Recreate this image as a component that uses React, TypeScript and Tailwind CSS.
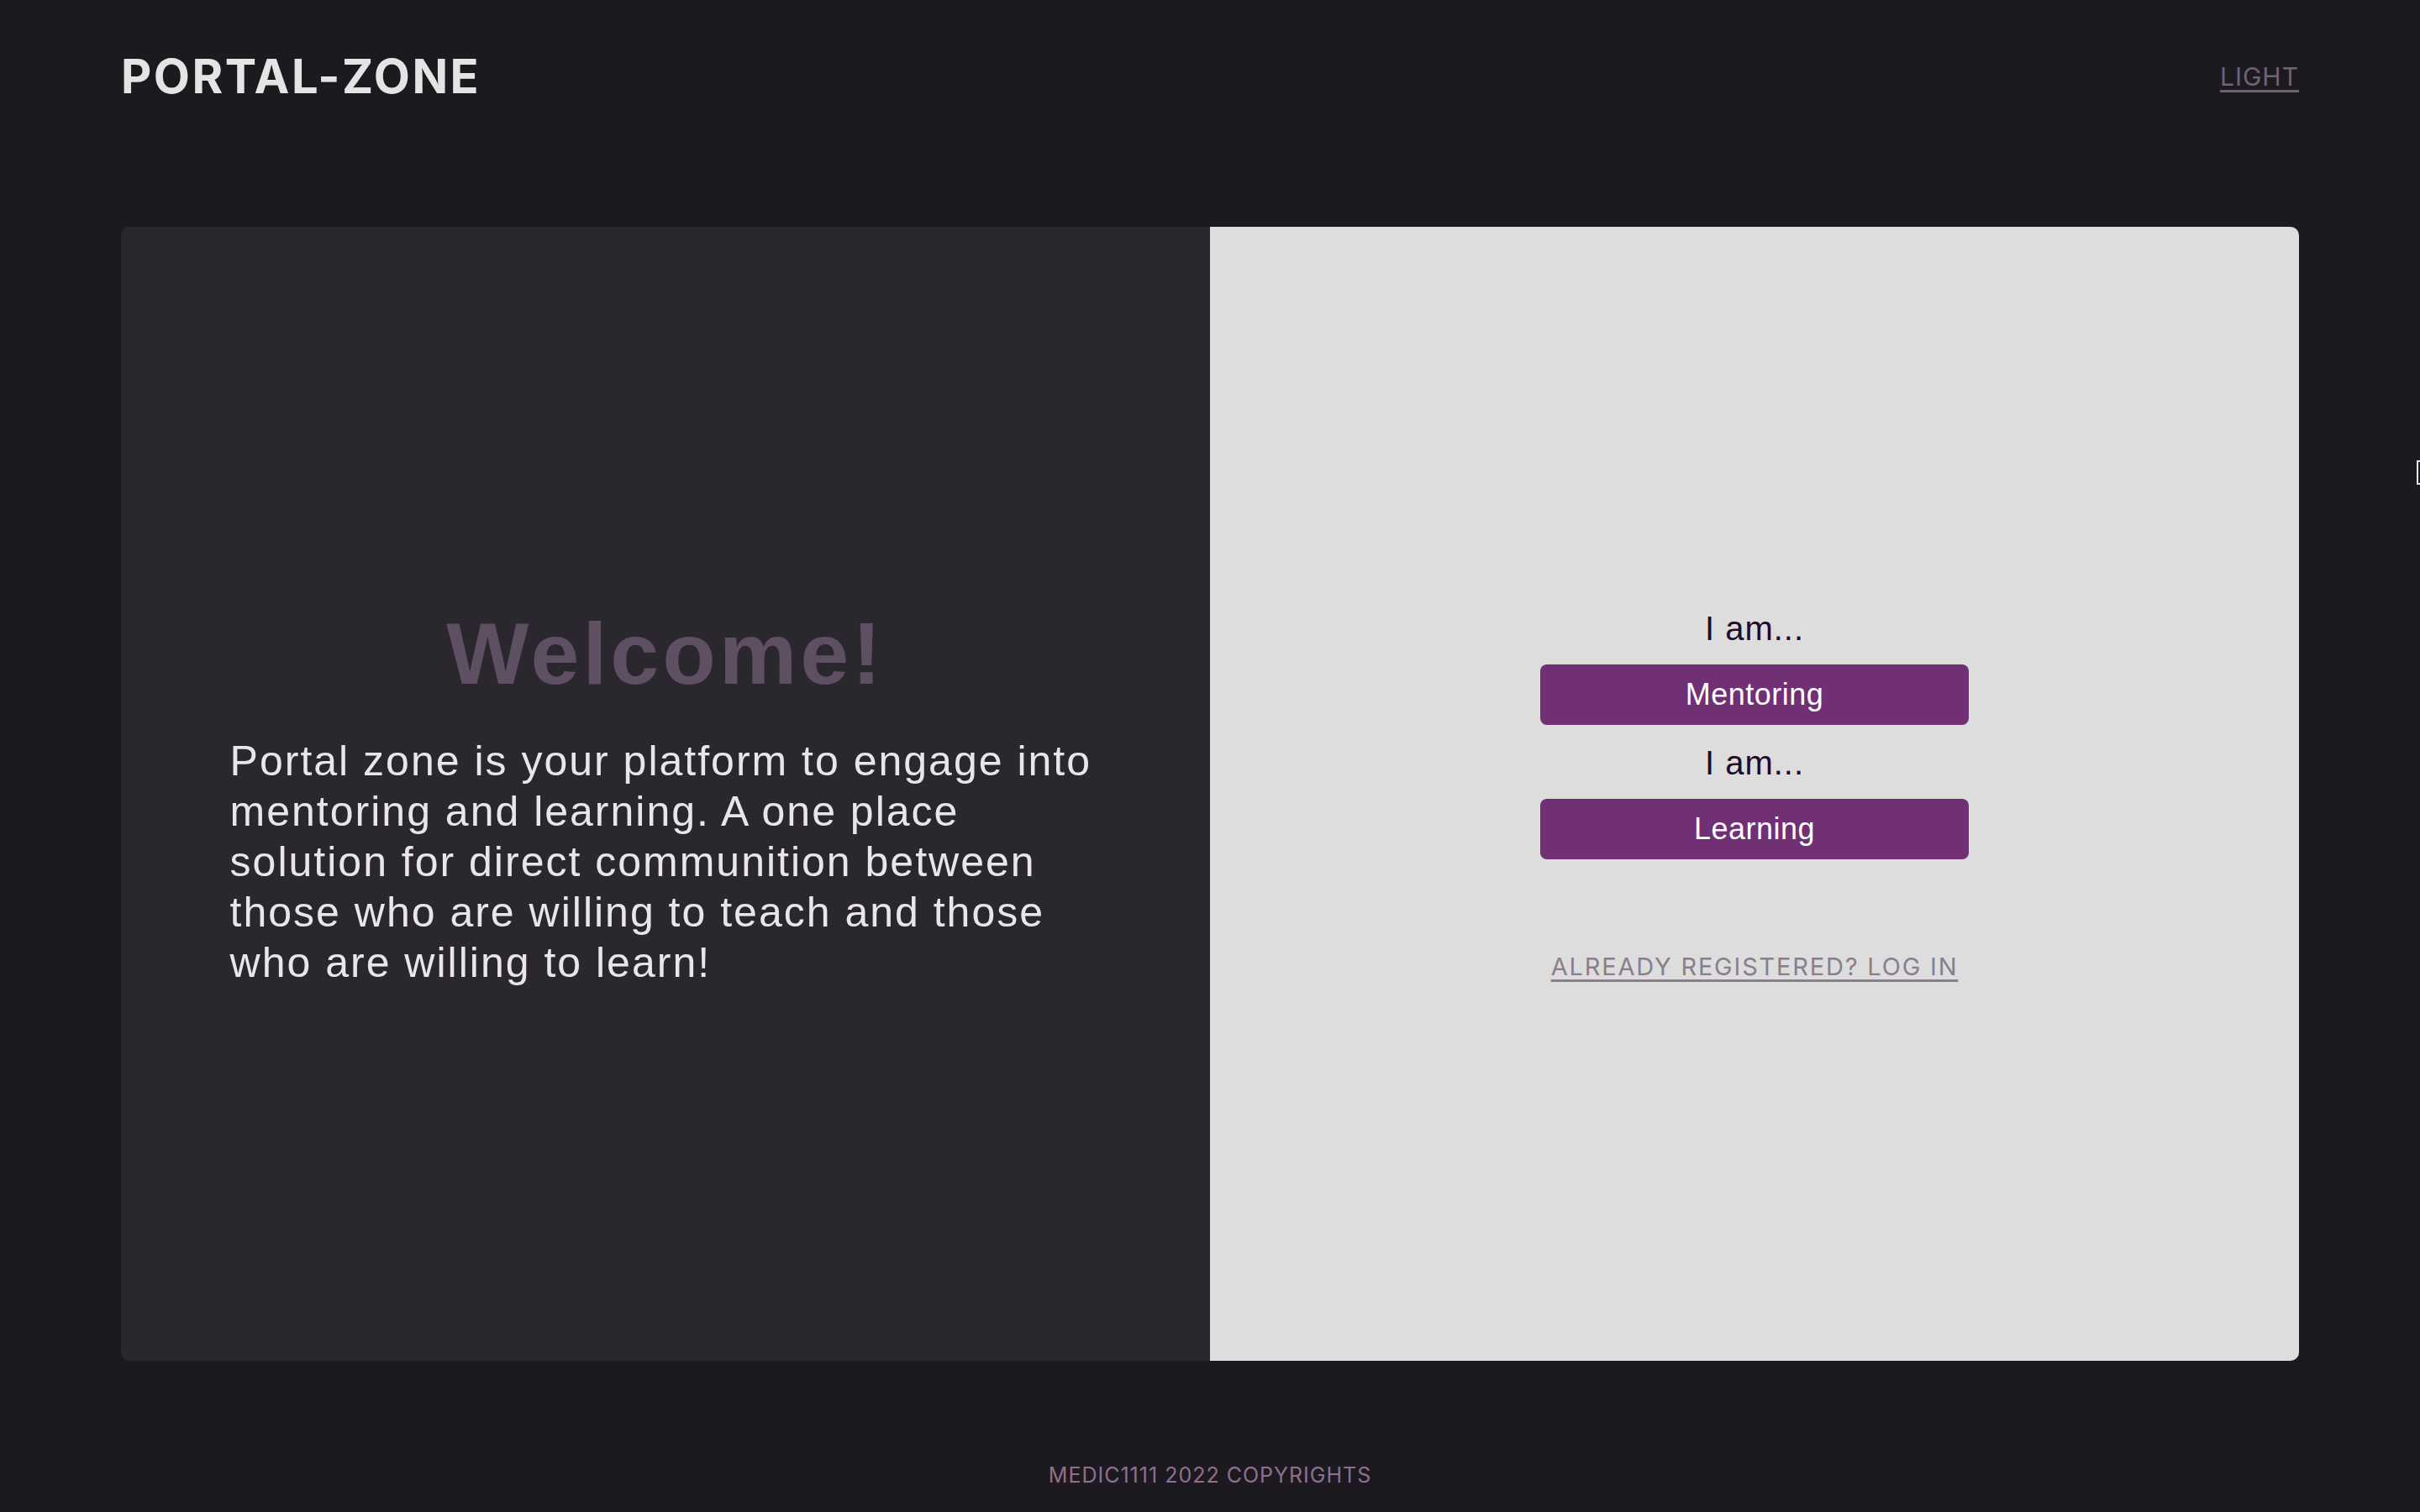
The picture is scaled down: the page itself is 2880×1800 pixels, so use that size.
import React from 'react';

const sans = "font-['Liberation_Sans',Arial,sans-serif]";
const ui = "font-['Inter','Noto_Sans',sans-serif]";

const RoleChoice: React.FC<{ label: string }> = ({ label }) => (
    <div className="flex flex-col items-center">
        <p className={`${sans} text-[40px] leading-[48px] tracking-[1px] text-[#230b27]`}>I am...</p>
        <button
            type="button"
            className={`${sans} mt-[19px] w-[510px] h-[72px] rounded-[8px] bg-[#712f74] text-white text-[36px] tracking-[0.5px]`}
        >
            {label}
        </button>
    </div>
);

export default function App() {
    return (
        <div className="relative min-h-screen h-[1800px] bg-[#1c1a1f] px-[144px] flex flex-col overflow-hidden">
            {/* Header */}
            <header className="h-[182px] flex items-center justify-between">
                <h1 className={`${ui} text-[56px] font-bold tracking-[2.5px] text-[#e4e4e4] leading-none`}>
                    PORTAL-ZONE
                </h1>
                <a href="#" className={`${ui} text-[30px] tracking-[1px] text-[#6f6272] underline underline-offset-[5px] decoration-[3px]`}>
                    LIGHT
                </a>
            </header>

            {/* Card */}
            <main className="mt-[88px] h-[1350px] grid grid-cols-2 rounded-[10px] overflow-hidden">
                <section className="bg-[#2b272e] flex flex-col items-center justify-center pt-[4px]">
                    <h2 className={`${sans} text-[104px] font-bold tracking-[4px] text-[#5e4f63] leading-[120px]`}>
                        Welcome!
                    </h2>
                    <p className={`${sans} mt-[38px] w-[80%] text-[50px] leading-[60px] tracking-[2px] text-[#e8e6ea]`}>
                        Portal zone is your platform to engage into mentoring and learning. A one place solution for direct communition between those who are willing to teach and those who are willing to learn!
                    </p>
                </section>
                <section className="bg-[#dddddd] flex flex-col items-center justify-center pt-[4px]">
                    <RoleChoice label="Mentoring" />
                    <div className="mt-[21px]">
                        <RoleChoice label="Learning" />
                    </div>
                    <a href="#" className={`${ui} mt-[108px] text-[29px] leading-[40px] tracking-[1.8px] text-[#8a7d8c] underline underline-offset-[5px] decoration-[3px]`}>
                        ALREADY REGISTERED? LOG IN
                    </a>
                </section>
            </main>

            {/* Footer */}
            <footer className="flex-1 flex items-end justify-center pb-[28px]">
                <p className={`${ui} text-[25px] leading-[32px] tracking-[1px] text-[#8e6f92]`}>
                    MEDIC1111 2022 COPYRIGHTS
                </p>
            </footer>

            {/* stray cursor at the right edge */}
            <div className="absolute right-0 top-[548px] w-[4px] h-[29px] border-l-[2px] border-y-[2px] border-[#e8e8e8]" />
        </div>
    );
}
